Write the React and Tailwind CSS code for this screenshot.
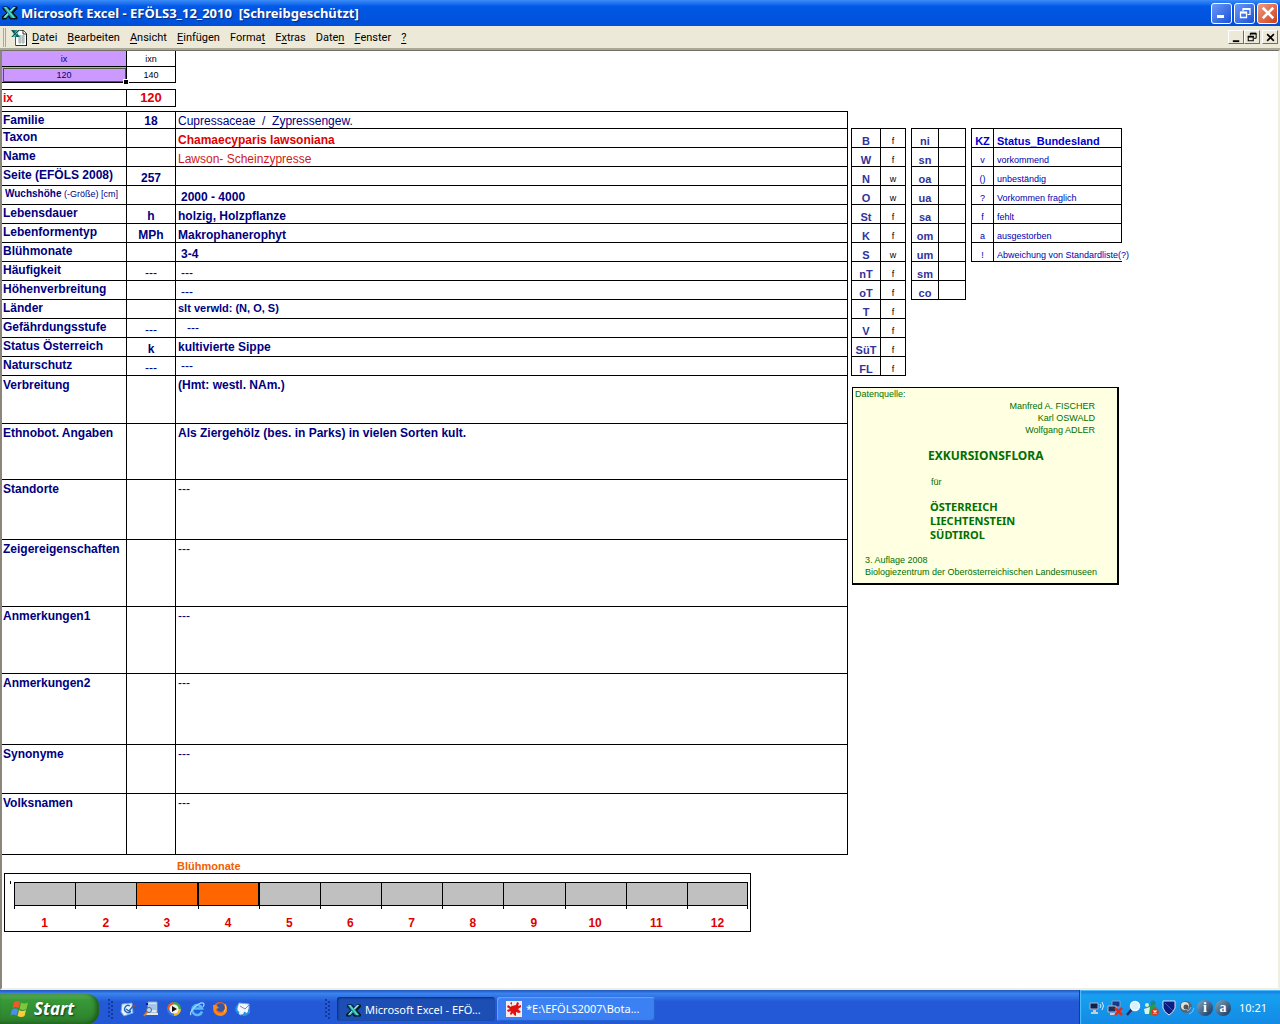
import React from "react";

const TAHOMA = "font-['Noto_Sans',sans-serif]";

function ExcelIcon({ className }) {
  return (
    <svg viewBox="0 0 16 14" className={className} aria-hidden="true">
      <path d="M1 1h5l3 3 2-3h4v2l-4 4 4 4v2H8L6 10l-2 3H0v-2l5-4-4-4z" fill="#06141c" stroke="#06141c" strokeLinejoin="round" />
      <path d="M11 1h3L4 12H1z" fill="#3fc0ba" />
      <path d="M12 1h1L3 11H2z" fill="#c8f6f2" />
      <path d="M1 1h4l9 11H9z" fill="#159a94" />
      <path d="M2 1h2l9 11h-2z" fill="#5fd6d0" />
    </svg>
  );
}

function BookIcon() {
  return (
    <svg viewBox="0 0 16 17" className="h-[17px] w-4" aria-hidden="true">
      <path d="M4.500 1.500h8l3 3v12h-11z" fill="#fff" stroke="#555" />
      <path d="M12 1v4h4" fill="none" stroke="#333" />
      <path d="M7 7h7M7 9h7M7 11h7M7 13h7M9 6v9M12 6v9" stroke="#9aa" />
      <path d="M15.500 5v12H5" fill="none" stroke="#111" />
      <path d="M0 1h4l5 7H5z" fill="#127c78" />
      <path d="M6 1h3L4 8H0z" fill="#35c0b8" />
      <path d="M1 1l6 7M8 1L1 8" stroke="#03272a" strokeWidth=".7" />
    </svg>
  );
}

function RestoreGlyph({ className }) {
  return (
    <svg viewBox="0 0 12 12" className={className} fill="none" stroke="currentColor" aria-hidden="true">
      <path d="M4 4V1.500h7v6H8.500" strokeWidth="1.200" />
      <path d="M4 2h7" strokeWidth="2" />
      <path d="M1.500 5.500h6v5h-6z" strokeWidth="1.300" />
      <path d="M1 5.500h7" strokeWidth="2" />
    </svg>
  );
}

function CrossGlyph({ className }) {
  return (
    <svg viewBox="0 0 12 12" className={className} aria-hidden="true">
      <path d="M1.500 1.500l9 9M10.500 1.500l-9 9" stroke="currentColor" strokeWidth="2.200" />
    </svg>
  );
}

function TitleBar() {
  const base = "flex size-[21px] items-center justify-center rounded-[3px] border border-white text-white";
  return (
    <header className="flex h-[26px] items-center bg-linear-to-b from-[#3a8cf8] via-[#0058e6] via-25% to-[#0050d8] pr-[2px] pl-[2px]">
      <ExcelIcon className="h-[14px] w-4" />
      <h1 className={`${TAHOMA} ml-[3px] flex-1 text-[13px] leading-5 font-bold whitespace-pre text-white [text-shadow:1px_1px_1px_#0a2a80]`}>
        {"Microsoft Excel - EFÖLS3_12_2010  [Schreibgeschützt]"}
      </h1>
      <div className="flex gap-[2px]">
        <button aria-label="Minimieren" className={`${base} bg-linear-to-br from-[#6b98f6] to-[#1c4fd8]`}>
          <svg viewBox="0 0 12 12" className="size-3" aria-hidden="true">
            <path d="M1 8h7v3H1z" fill="#fff" />
          </svg>
        </button>
        <button aria-label="Verkleinern" className={`${base} bg-linear-to-br from-[#6b98f6] to-[#1c4fd8]`}>
          <RestoreGlyph className="size-3" />
        </button>
        <button aria-label="Schließen" className={`${base} bg-linear-to-br from-[#ee9a80] to-[#cc3a10]`}>
          <CrossGlyph className="size-[14px]" />
        </button>
      </div>
    </header>
  );
}

const menus = [
  ["", "D", "atei"],
  ["", "B", "earbeiten"],
  ["", "A", "nsicht"],
  ["", "E", "infügen"],
  ["Forma", "t", ""],
  ["E", "x", "tras"],
  ["Date", "n", ""],
  ["", "F", "enster"],
  ["", "?", ""],
];

function MenuBar() {
  const base =
    "flex h-[14px] w-4 items-center justify-center border border-t-white border-l-white border-r-[#716f64] border-b-[#716f64] bg-[#ece9d8] text-black";
  return (
    <nav className="flex h-6 items-center border-b-2 border-[#aca899] bg-[#ece9d8] pr-[2px] pl-[3px]">
      <span className="h-[19px] w-[3px] border-r border-l border-[#aca899]" />
      <span className="ml-[5px]">
        <BookIcon />
      </span>
      <div className="ml-[5px] flex flex-1 gap-[10px] pt-px font-['Roboto',sans-serif] text-[11px] leading-4 text-black">
        {menus.map(([pre, key, post]) => (
          <button key={pre + key + post}>
            {pre}
            <span className="underline underline-offset-2">{key}</span>
            {post}
          </button>
        ))}
      </div>
      <div className="flex">
        <button aria-label="Mappe minimieren" className={base}>
          <svg viewBox="0 0 12 12" className="size-[11px]" aria-hidden="true">
            <path d="M2 9h7v2H2z" />
          </svg>
        </button>
        <button aria-label="Mappe wiederherstellen" className={base}>
          <RestoreGlyph className="size-[10px]" />
        </button>
        <button aria-label="Mappe schließen" className={`${base} ml-[2px]`}>
          <CrossGlyph className="size-[9px]" />
        </button>
      </div>
    </nav>
  );
}

function IndexTables() {
  return (
    <>
      <table className="w-[174px] table-fixed border-separate border-spacing-0 text-center text-[9px] leading-3">
        <colgroup>
          <col className="w-[125px]" />
          <col />
        </colgroup>
        <tbody>
          <tr className="h-4">
            <td className="border-r border-b border-black bg-[#cc99ff] p-0 text-[#000080]">ix</td>
            <td className="border-r border-b border-black p-0">ixn</td>
          </tr>
          <tr className="h-4">
            <td className="relative border-r border-b border-black bg-[#cc99ff] p-0 text-[#000080] outline-1 -outline-offset-2 outline-[#4a5a3a]">
              120
              <span className="absolute -right-[2px] -bottom-[2px] size-1 bg-black outline-1 outline-white" />
            </td>
            <td className="border-r border-b border-black p-0">140</td>
          </tr>
        </tbody>
      </table>
      <table className="mt-[6px] w-[174px] table-fixed border-separate border-spacing-0 border-t border-black font-bold text-[#e00000]">
        <colgroup>
          <col className="w-[125px]" />
          <col />
        </colgroup>
        <tbody>
          <tr className="h-[17px]">
            <td className="border-r border-b border-black p-0 pl-px align-top leading-4">ix</td>
            <td className="border-r border-b border-black p-0 text-center text-[13px] leading-4">120</td>
          </tr>
        </tbody>
      </table>
    </>
  );
}

const T = "align-top leading-[18px]";
const B = "align-bottom leading-[14px]";

const rows = [
  { h: "h-[17px]", label: "Familie", code: "18", text: "Cupressaceae  /  Zypressengew.", cls: `${B} font-normal whitespace-pre` },
  { h: "h-[19px]", label: "Taxon", text: "Chamaecyparis lawsoniana", cls: `${B} text-[#e00000]` },
  { h: "h-[19px]", label: "Name", text: "Lawson- Scheinzypresse", cls: `${B} font-normal text-[#d01818]` },
  { h: "h-[19px]", label: "Seite (EFÖLS 2008)", code: "257", text: "", cls: B },
  { h: "h-[19px]", label: "Wuchshöhe", extra: " (-Größe) [cm]", text: "2000 - 4000", cls: `${B} pl-[5px]` },
  { h: "h-[19px]", label: "Lebensdauer", code: "h", text: "holzig, Holzpflanze", cls: B },
  { h: "h-[19px]", label: "Lebenformentyp", code: "MPh", text: "Makrophanerophyt", cls: B },
  { h: "h-[19px]", label: "Blühmonate", text: "3-4", cls: `${B} pl-[5px]` },
  { h: "h-[19px]", label: "Häufigkeit", code: "---", text: "---", cls: `${B} pl-[5px] font-normal` },
  { h: "h-[19px]", label: "Höhenverbreitung", text: "---", cls: `${B} pl-[5px] font-normal` },
  { h: "h-[19px]", label: "Länder", text: "slt verwld: (N, O, S)", cls: "align-top text-[11px] leading-4" },
  { h: "h-[19px]", label: "Gefährdungsstufe", code: "---", text: "---", cls: `${T} pl-[11px] font-normal` },
  { h: "h-[19px]", label: "Status Österreich", code: "k", text: "kultivierte Sippe", cls: T },
  { h: "h-[19px]", label: "Naturschutz", code: "---", text: "---", cls: `${T} pl-[5px] font-normal` },
  { h: "h-[48px]", label: "Verbreitung", text: "(Hmt: westl. NAm.)", cls: T },
  { h: "h-[56px]", label: "Ethnobot. Angaben", text: "Als Ziergehölz (bes. in Parks) in vielen Sorten kult.", cls: T },
  { h: "h-[60px]", label: "Standorte", text: "---", cls: `${T} font-normal` },
  { h: "h-[67px]", label: "Zeigereigenschaften", text: "---", cls: `${T} font-normal` },
  { h: "h-[67px]", label: "Anmerkungen1", text: "---", cls: `${T} font-normal` },
  { h: "h-[71px]", label: "Anmerkungen2", text: "---", cls: `${T} font-normal` },
  { h: "h-[49px]", label: "Synonyme", text: "---", cls: `${T} font-normal` },
  { h: "h-[61px]", label: "Volksnamen", text: "---", cls: `${T} font-normal` },
];

function DetailTable() {
  return (
    <table className="mt-1 w-full table-fixed border-separate border-spacing-0 border-t border-black font-bold text-[#000080]">
      <colgroup>
        <col className="w-[125px]" />
        <col className="w-[49px]" />
        <col />
      </colgroup>
      <tbody>
        {rows.map((r, i) => (
          <tr key={r.label} className={r.h}>
            <th scope="row" className={`overflow-hidden border-r border-b border-black p-0 pl-px text-left align-top whitespace-nowrap ${i > 13 ? "leading-[18px]" : "leading-4"}`}>
              {r.extra ? (
                <span className="block pl-[2px] text-[10px]">
                  {r.label}
                  <span className="text-[9px] font-normal">{r.extra}</span>
                </span>
              ) : (
                r.label
              )}
            </th>
            <td className={`border-r border-b border-black p-0 text-center align-bottom leading-[14px] ${r.code === "---" ? "font-normal" : ""}`}>{r.code}</td>
            <td className={`border-r border-b border-black p-0 ${/pl-/.test(r.cls) ? "" : "pl-[2px]"} ${r.cls}`}>{r.text}</td>
          </tr>
        ))}
      </tbody>
    </table>
  );
}

const months = [1, 2, 3, 4, 5, 6, 7, 8, 9, 10, 11, 12];

function BloomChart() {
  return (
    <section>
      <h2 className="pt-[3px] pl-[175px] text-[11px] leading-4 font-bold text-[#f06000]">Blühmonate</h2>
      <div className="mt-[-1px] mr-[97px] ml-[2px] flex border border-black pr-[2px]">
        <span className="w-[9px] shrink-0 pt-[7px] pl-[5px]">
          <span className="block h-[3px] w-px bg-black" />
        </span>
        <ol className="grid h-[57px] flex-1 grid-cols-12 pt-2">
          {months.map((m) => (
            <li key={m}>
              <div className={`h-6 border-y border-l border-black ${m === 3 || m === 4 ? "border-r bg-[#ff6600]" : m === 12 ? "border-r bg-[#c0c0c0]" : "bg-[#c0c0c0]"}`} />
              <div className={`h-[3px] border-l border-black ${m === 12 ? "border-r" : ""}`} />
              <div className="pt-[6px] text-center leading-4 font-bold text-[#e00000]">{m}</div>
            </li>
          ))}
        </ol>
      </div>
    </section>
  );
}

const laender = [
  ["B", "f"], ["W", "f"], ["N", "w"], ["O", "w"], ["St", "f"], ["K", "f"], ["S", "w"],
  ["nT", "f"], ["oT", "f"], ["T", "f"], ["V", "f"], ["SüT", "f"], ["FL", "f"],
];
const regionen = ["ni", "sn", "oa", "ua", "sa", "om", "um", "sm", "co"].map((r) => [r, ""]);
const status = [
  ["v", "vorkommend"],
  ["()", "unbeständig"],
  ["?", "Vorkommen fraglich"],
  ["f", "fehlt"],
  ["a", "ausgestorben"],
  ["!", "Abweichung von Standardliste(?)"],
];

function CodeTable({ data, width, first }) {
  return (
    <table className={`${width} table-fixed border-separate border-spacing-0 border-t border-l border-black text-center leading-[11px]`}>
      <colgroup>
        <col className={first} />
        <col />
      </colgroup>
      <tbody>
        {data.map(([k, v]) => (
          <tr key={k} className="h-[19px]">
            <th scope="row" className="border-r border-b border-black p-0 align-bottom text-[11px] text-[#333399]">{k}</th>
            <td className="border-r border-b border-black p-0 align-bottom text-[9px]">{v}</td>
          </tr>
        ))}
      </tbody>
    </table>
  );
}

function StatusTable() {
  return (
    <table className="w-[151px] table-fixed border-separate border-spacing-0 border-t border-l border-black text-[9px] leading-[11px] text-[#0000b0]">
      <colgroup>
        <col className="w-[22px]" />
        <col />
      </colgroup>
      <thead>
        <tr className="h-[19px] text-[11px] text-[#0000d0]">
          <th className="border-r border-b border-black p-0 align-bottom">KZ</th>
          <th className="border-r border-b border-black p-0 pl-[3px] text-left align-bottom">Status_Bundesland</th>
        </tr>
      </thead>
      <tbody>
        {status.map(([k, v]) => (
          <tr key={k} className="h-[19px]">
            <td className="border-r border-b border-black p-0 text-center align-bottom">{k}</td>
            <td className={`border-b border-black p-0 pl-[3px] align-bottom whitespace-nowrap ${k === "!" ? "" : "border-r"}`}>{v}</td>
          </tr>
        ))}
      </tbody>
    </table>
  );
}

function SourceCard() {
  return (
    <section className="mt-[11px] ml-px w-[267px] border border-r-2 border-b-2 border-black bg-[#ffffe1] pb-[5px] text-[9px] leading-3 text-[#007000]">
      <p className="pl-[2px]">Datenquelle:</p>
      <div className="pr-[22px] text-right">
        <p>Manfred A. FISCHER</p>
        <p>Karl OSWALD</p>
        <p>Wolfgang ADLER</p>
      </div>
      <h2 className={`${TAHOMA} mt-3 pl-[75px] text-[12px] leading-4 font-bold`}>EXKURSIONSFLORA</h2>
      <p className="mt-3 pl-[78px]">für</p>
      <div className={`${TAHOMA} mt-3 pl-[77px] text-[11px] leading-[14px] font-bold`}>
        <p>ÖSTERREICH</p>
        <p>LIECHTENSTEIN</p>
        <p>SÜDTIROL</p>
      </div>
      <div className="mt-3 pl-[12px]">
        <p>3. Auflage 2008</p>
        <p>Biologiezentrum der Oberösterreichischen Landesmuseen</p>
      </div>
    </section>
  );
}

function WindowsFlag() {
  return (
    <svg viewBox="0 0 20 18" className="h-[18px] w-5" aria-hidden="true">
      <path d="M4 2q3-2 6 0L8.500 8q-3-2-6 0z" fill="#f0592a" />
      <path d="M11 2.500q3 2 7 0L16.500 9q-3 2-7 0z" fill="#7cc83a" />
      <path d="M2 9.500q3-2 6 0L6.500 15.500q-3-2-6 0z" fill="#4c8df0" />
      <path d="M9 10q3 2 7 0l-1.500 6q-3 2-7 0z" fill="#f8cf3a" />
    </svg>
  );
}

function Grip() {
  return (
    <svg viewBox="0 0 6 20" className="h-5 w-[6px]" aria-hidden="true">
      {[0, 4, 8, 12, 16].map((y) => (
        <g key={y} fill="#123a9c">
          <rect x="0" y={y} width="2" height="2" />
          <rect x="3" y={y + 2} width="2" height="2" />
        </g>
      ))}
    </svg>
  );
}

const quick = [
  ["Desktop anzeigen", (
    <g key="a">
      <path d="M2 3l10-1 1 10-9 3-3-4z" fill="#e8f2fc" stroke="#6aa6e0" />
      <path d="M10 5a3.500 3.500 0 1 0 1 5M6 8l3 2 5-6" fill="none" stroke="#2068b8" strokeWidth="1.400" />
      <path d="M12 5l3-1v2z" fill="#c04020" />
    </g>
  )],
  ["Suche", (
    <g key="b">
      <path d="M5 1h9v11H5z" fill="#d8e8fa" stroke="#8ab" />
      <path d="M6 4h7M6 6h7M6 8h7" stroke="#70a0d8" />
      <path d="M3 12h12v2H3z" fill="#e8e8e0" />
      <circle cx="6" cy="9" r="2.500" fill="#b8dcff" stroke="#567" />
      <path d="M4 11l-3 4" stroke="#c87840" strokeWidth="2" />
      <path d="M3 2h2v2H3z" fill="#1010c0" />
    </g>
  )],
  ["Media Player", (
    <g key="c">
      <path d="M8 8V1a7 7 0 0 0-7 7z" fill="#e85a20" />
      <path d="M8 8h7a7 7 0 0 0-7-7z" fill="#40a840" />
      <path d="M8 8H1a7 7 0 0 0 7 7z" fill="#3878e0" />
      <path d="M8 8v7a7 7 0 0 0 7-7z" fill="#f4b820" />
      <circle cx="8" cy="8" r="4.600" fill="#f4f4f4" />
      <path d="M6 5l5 3-5 3z" fill="#111" />
    </g>
  )],
  ["Internet Explorer", (
    <g key="d" fill="none">
      <path d="M13 10.500A5 5 0 1 1 13 7.500H5" stroke="#58b8f8" strokeWidth="2.600" />
      <path d="M2 14C-1 11 10 1 14 2q2 1 0 4" stroke="#a0dcff" strokeWidth="1.200" />
    </g>
  )],
  ["Firefox", (
    <g key="e">
      <circle cx="8" cy="8" r="7" fill="#e8601c" />
      <circle cx="8.500" cy="6.500" r="4.200" fill="#3458a8" />
      <path d="M1 4q0 11 8 11 7-1 6-9l-1-2q0 7-5 8-5 0-5-4l3-1-3-3z" fill="#f88820" />
      <path d="M13 3q2 5-1 8" fill="none" stroke="#fcd040" />
    </g>
  )],
  ["Outlook Express", (
    <g key="f">
      <path d="M4 2l10 1v9l-9 2-4-5z" fill="#f0f6fc" stroke="#78b0e8" />
      <path d="M5 5l5 3 4-4" fill="none" stroke="#88a" />
      <path d="M2 5q-2 5 2 7M14 8q1 5-5 6l1-3" fill="none" stroke="#2890e8" strokeWidth="2" />
    </g>
  )],
];

const tray = [
  ["Drahtlosnetzwerk", (
    <g key="a">
      <path d="M1 3h8v6H1z" fill="#10204c" stroke="#a8b4c4" />
      <path d="M4 10h3v2h2v2H2v-2h2z" fill="#c8ccd4" />
      <path d="M11 4q2 2 0 4M13 2q3 4 0 8" fill="none" stroke="#d8ecff" />
    </g>
  )],
  ["Netzwerk getrennt", (
    <g key="b">
      <path d="M5 1h8v6H5z" fill="#183890" stroke="#90a0b8" />
      <path d="M1 6h8v6H1z" fill="#183060" stroke="#b0bccc" />
      <path d="M3 13h6v2H3z" fill="#c8ccd4" />
      <path d="M8 8l7 7M15 8l-7 7" stroke="#e02818" strokeWidth="2.200" />
    </g>
  )],
  ["Suchdienst", (
    <g key="c">
      <path d="M7 9l-5 6" stroke="#28285c" strokeWidth="2.500" />
      <circle cx="10" cy="6" r="4.500" fill="#d8f0ff" stroke="#f4faff" strokeWidth="1.500" />
    </g>
  )],
  ["Messenger", (
    <g key="d">
      <circle cx="10" cy="3" r="2.500" fill="#208878" />
      <path d="M4 6q7-2 10 1l-3 8H6z" fill="#2c9858" />
      <circle cx="4" cy="5" r="2" fill="#c8f0d8" />
      <path d="M1 9l6-2-1 7H2z" fill="#d8f4e4" />
      <circle cx="12" cy="12" r="3.800" fill="#d83c20" />
      <path d="M10.500 10.500l3 3M13.500 10.500l-3 3" stroke="#fff" strokeWidth="1.200" />
    </g>
  )],
  ["Schutzschild", (
    <g key="e">
      <path d="M2 1h12v7q-1 4-6 7-5-3-6-7z" fill="#0c1c80" stroke="#e0e4f0" />
      <path d="M4 3l8 8" stroke="#4058b8" />
    </g>
  )],
  ["Lautstärke", (
    <g key="f">
      <circle cx="7" cy="7" r="6" fill="#5c646c" />
      <circle cx="6" cy="6" r="4" fill="#e0e0dc" />
      <circle cx="7" cy="7" r="2.500" fill="#50545c" />
      <path d="M10 14q4-1 5-6M8 11q3 0 4-4" fill="none" stroke="#78c0ff" />
    </g>
  )],
];

function Badge({ children, label }) {
  return (
    <button aria-label={label} className="flex size-4 items-center justify-center rounded-full bg-linear-to-br from-[#8ca8bc] to-[#0c3460] font-['Liberation_Serif',serif] text-[14px] leading-3 font-bold text-white">
      {children}
    </button>
  );
}

function Taskbar() {
  return (
    <footer className={`${TAHOMA} flex h-[34px] items-stretch bg-linear-to-b from-[#1f55c0] via-[#3a84ee] via-10% to-[#2359d6] to-35% text-[11px] text-white`}>
      <button className="mt-1 flex w-[99px] items-center gap-1 rounded-r-[12px] bg-linear-to-b from-[#5cae5c] via-[#379a37] via-20% to-[#2c7e2c] pl-[10px] shadow-[inset_-3px_-1px_4px_#1d5a1d]">
        <WindowsFlag />
        <span className="text-[17px] leading-6 font-bold italic [text-shadow:1px_1px_2px_#103c10]">Start</span>
      </button>
      <div className="flex items-center pt-1 pl-[9px]">
        <Grip />
        <div className="ml-[6px] flex gap-[7px]">
          {quick.map(([label, art]) => (
            <button key={label} aria-label={label}>
              <svg viewBox="0 0 16 16" className="size-4">{art}</svg>
            </button>
          ))}
        </div>
      </div>
      <div className="ml-[74px] flex min-w-0 flex-1 items-center gap-[2px] pt-1">
        <Grip />
        <button className="ml-1 flex h-6 w-[158px] items-center gap-[3px] rounded-[3px] bg-[#1c4eb4] pl-[9px] shadow-[inset_1px_1px_2px_#0c2c78]">
          <ExcelIcon className="mt-[2px] h-[13px] w-4" />
          <span className="pt-[2px]">Microsoft Excel - EFÖ...</span>
        </button>
        <button className="flex h-6 w-[158px] items-center gap-1 rounded-[3px] bg-[#3c81f3] pl-[9px] shadow-[inset_1px_1px_1px_#6ca4fa,inset_-1px_-1px_1px_#2460cc]">
          <svg viewBox="0 0 16 16" className="size-4" aria-hidden="true">
            <path d="M0 0h16v16H0z" fill="#f6ecec" />
            <path d="M6 5l4-1 1-3 2 1-1 3 3-1v2l-3 2 3 3-2 1-3-1v4l-2-1-1-2-2 2-1-1 1-3-3 1-1-2 3-1-3-2 1-2 3 2 1-2-2-2 2-1z" fill="#e01010" />
          </svg>
          <span>*E:\EFÖLS2007\Bota...</span>
        </button>
      </div>
      <div className="flex w-[201px] items-center border-l border-[#0c3c98] bg-linear-to-b from-[#1a70d8] via-[#18a0f0] via-15% to-[#128ae4] pt-[2px] pl-[9px] shadow-[inset_1px_1px_1px_#50c0ff]">
        <div className="flex flex-1 gap-[2px]">
          {tray.map(([label, art]) => (
            <button key={label} aria-label={label}>
              <svg viewBox="0 0 16 16" className="size-4">{art}</svg>
            </button>
          ))}
          <Badge label="Information">i</Badge>
          <Badge label="Antivirus">a</Badge>
        </div>
        <time className="mr-[13px]">10:21</time>
      </div>
    </footer>
  );
}

export default function App() {
  return (
    <div className="flex min-h-screen flex-col bg-white font-['Liberation_Sans',Arial,sans-serif] text-[12px] text-black">
      <TitleBar />
      <MenuBar />
      <main className="flex flex-1 items-start border-t border-r-2 border-b-2 border-l-2 border-t-[#716f64] border-r-[#f1eee2] border-b-[#f1eee2] border-l-[#8a877a] bg-white">
        <div className="min-w-0 flex-1">
          <IndexTables />
          <DetailTable />
          <BloomChart />
        </div>
        <aside className="w-[430px] shrink-0 pt-[77px] pl-[3px]">
          <div className="flex items-start gap-[5px]">
            <CodeTable data={laender} width="w-[55px]" first="w-[29px]" />
            <CodeTable data={regionen} width="w-[55px]" first="w-[27px]" />
            <StatusTable />
          </div>
          <SourceCard />
        </aside>
      </main>
      <Taskbar />
    </div>
  );
}
